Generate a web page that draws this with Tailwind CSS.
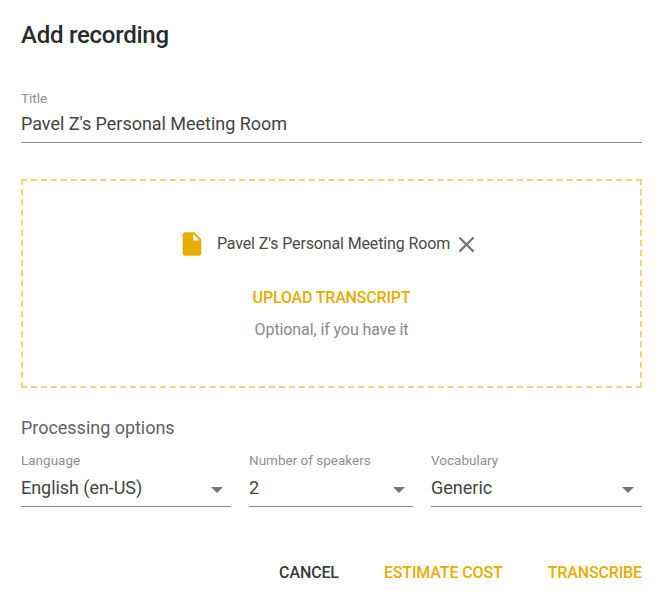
<!DOCTYPE html>
<html>
<head>
<meta charset="utf-8">
<script src="https://cdn.jsdelivr.net/npm/@tailwindcss/browser@4"></script>
</head>
<body class="bg-white">
<div class="w-[664px] h-[595px] overflow-hidden pl-[21px] pr-[22px] font-['Roboto',sans-serif] text-[#212121]">
  <h1 class="pt-[20px] h-[90px] text-[24px] leading-[30px] font-medium tracking-[-0.25px] text-[#2a2a2a]">Add recording</h1>
  <div class="h-[53px] border-b border-[#8c8c8c]">
    <div class="text-[13.5px] leading-[16px] text-[#8f8f8f]">Title</div>
    <div class="text-[18px] leading-[36px] tracking-[-0.03px] text-[#444]">Pavel Z's Personal Meeting Room</div>
  </div>
  <div class="mt-[36px] h-[209px] border-2 border-dashed border-[#f3d27a] flex flex-col items-center">
    <div class="mt-[51px] h-[24px] flex items-center pr-[5px]">
      <svg class="w-[28px] h-[28px] mr-[11px]" viewBox="0 0 24 24"><path fill="#e6ac00" d="M6 2c-1.1 0-1.99.9-1.99 2L4 20c0 1.1.89 2 1.99 2H18c1.1 0 2-.9 2-2V8l-6-6H6zm7 7V3.5L18.5 9H13z"/></svg>
      <span class="text-[16px] tracking-[-0.13px] text-[#4a4a4a] leading-[24px]">Pavel Z's Personal Meeting Room</span>
      <svg class="w-[27px] h-[27px] ml-[3px]" viewBox="0 0 24 24"><path fill="#757575" d="M19 6.41L17.59 5 12 10.59 6.41 5 5 6.41 10.59 12 5 17.59 6.41 19 12 13.41 17.59 19 19 17.59 13.41 12z"/></svg>
    </div>
    <div class="mt-[30px] text-[16px] leading-[24px] font-medium tracking-[-0.18px] text-[#e6ac00]">UPLOAD TRANSCRIPT</div>
    <div class="mt-[8px] text-[16px] leading-[24px] tracking-[-0.1px] text-[#8a8a8a]">Optional, if you have it</div>
  </div>
  <div class="mt-[28px] text-[18px] leading-[24px] tracking-[-0.03px] text-[#636363]">Processing options</div>
  <div class="mt-[12px] flex gap-[18px]">
    <div class="w-[210px] h-[55px] border-b border-[#8c8c8c]">
      <div class="text-[13.5px] leading-[16px] text-[#8f8f8f]">Language</div>
      <div class="mt-[3px] flex items-center justify-between pr-[8px]">
        <span class="text-[18px] leading-[34px] tracking-[-0.05px] text-[#444]">English (en-US)</span>
        <svg class="w-[12px] h-[6px] mt-[4px]" viewBox="0 0 12 6"><path d="M0 0h12L6 6z" fill="#757575"/></svg>
      </div>
    </div>
    <div class="w-[164px] h-[55px] border-b border-[#8c8c8c]">
      <div class="text-[13.5px] leading-[16px] text-[#8f8f8f]">Number of speakers</div>
      <div class="mt-[3px] flex items-center justify-between pr-[8px]">
        <span class="text-[18px] leading-[34px] text-[#444]">2</span>
        <svg class="w-[12px] h-[6px] mt-[4px]" viewBox="0 0 12 6"><path d="M0 0h12L6 6z" fill="#757575"/></svg>
      </div>
    </div>
    <div class="w-[211px] h-[55px] border-b border-[#8c8c8c]">
      <div class="text-[13.5px] leading-[16px] text-[#8f8f8f]">Vocabulary</div>
      <div class="mt-[3px] flex items-center justify-between pr-[8px]">
        <span class="text-[18px] leading-[34px] text-[#444]">Generic</span>
        <svg class="w-[12px] h-[6px] mt-[4px]" viewBox="0 0 12 6"><path d="M0 0h12L6 6z" fill="#757575"/></svg>
      </div>
    </div>
  </div>
  <div class="mt-[54px] flex justify-end gap-[45px] text-[16px] leading-[24px] font-medium tracking-[-0.13px] text-[#e6ac00]">
    <span class="text-[#3a3a3a]">CANCEL</span>
    <span>ESTIMATE COST</span>
    <span>TRANSCRIBE</span>
  </div>
</div>
</body>
</html>
